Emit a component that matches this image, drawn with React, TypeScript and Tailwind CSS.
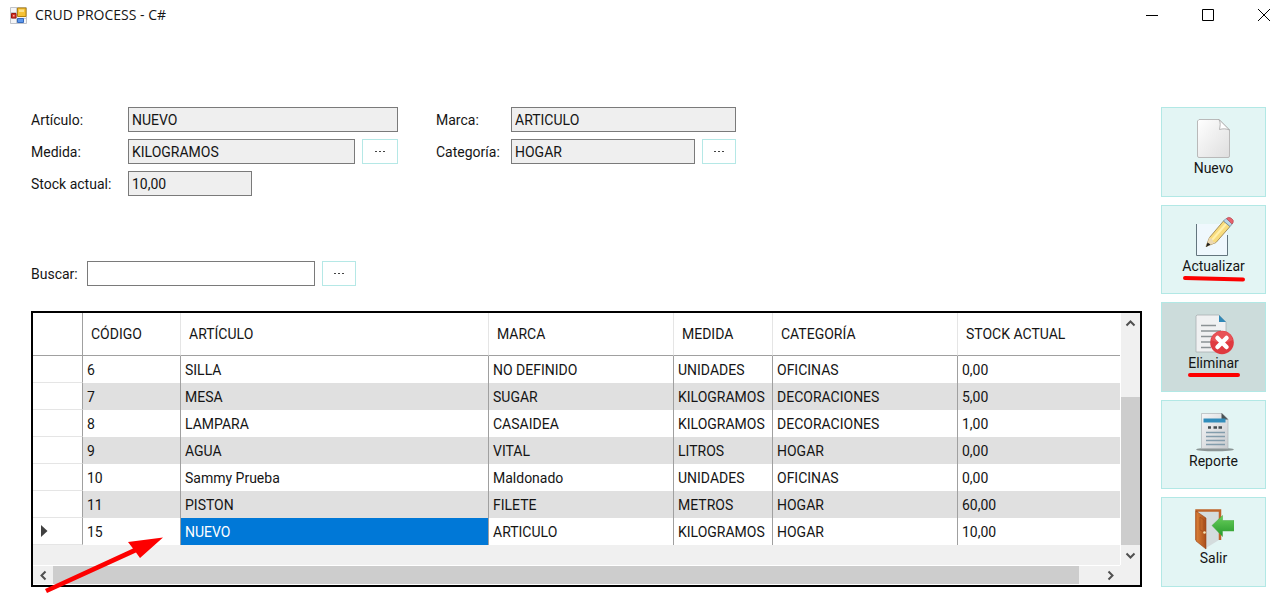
import { useState } from 'react'
import type { ReactNode } from 'react'

type Articulo = {
  codigo: number
  articulo: string
  marca: string
  medida: string
  categoria: string
  stock: string
}

const ARTICULOS: Articulo[] = [
  { codigo: 6, articulo: 'SILLA', marca: 'NO DEFINIDO', medida: 'UNIDADES', categoria: 'OFICINAS', stock: '0,00' },
  { codigo: 7, articulo: 'MESA', marca: 'SUGAR', medida: 'KILOGRAMOS', categoria: 'DECORACIONES', stock: '5,00' },
  { codigo: 8, articulo: 'LAMPARA', marca: 'CASAIDEA', medida: 'KILOGRAMOS', categoria: 'DECORACIONES', stock: '1,00' },
  { codigo: 9, articulo: 'AGUA', marca: 'VITAL', medida: 'LITROS', categoria: 'HOGAR', stock: '0,00' },
  { codigo: 10, articulo: 'Sammy Prueba', marca: 'Maldonado', medida: 'UNIDADES', categoria: 'OFICINAS', stock: '0,00' },
  { codigo: 11, articulo: 'PISTON', marca: 'FILETE', medida: 'METROS', categoria: 'HOGAR', stock: '60,00' },
  { codigo: 15, articulo: 'NUEVO', marca: 'ARTICULO', medida: 'KILOGRAMOS', categoria: 'HOGAR', stock: '10,00' },
]

const COLUMNAS = ['CÓDIGO', 'ARTÍCULO', 'MARCA', 'MEDIDA', 'CATEGORÍA', 'STOCK ACTUAL']

const CAMPO = 'h-[25px] min-w-0 border border-[#7a7a7a] bg-[#efefef] px-[3px] outline-none'

function IconoNuevo() {
  return (
    <svg width="40" height="42" viewBox="0 0 40 42" aria-hidden="true">
      <defs>
        <linearGradient id="hoja" x1="0" y1="0" x2="1" y2="1">
          <stop offset="0" stopColor="#ffffff" />
          <stop offset="1" stopColor="#dedede" />
        </linearGradient>
      </defs>
      <path d="M5 1.500H25L35.500 12V38A1.500 1.500 0 0 1 34 39.500H5A1.500 1.500 0 0 1 3.500 38V3Z" fill="url(#hoja)" stroke="#b9b9b9" />
      <path d="M25 1.500C27 5 26 8 25.500 11.500C29 10.500 32 10.500 35.500 12Z" fill="#fff" stroke="#a5a5a5" strokeWidth=".8" />
    </svg>
  )
}

function IconoActualizar() {
  return (
    <svg width="40" height="42" viewBox="0 0 40 42" aria-hidden="true">
      <path d="M2 8H33V40H2Z" fill="#eff8fd" />
      <path d="M2.500 8V39.500H33.500V19" fill="none" stroke="#63757e" />
      <path d="M12 30.500L15.500 21.500L29.500 5L36 10.500L22 26.500Z" fill="#f8dc7d" stroke="#937841" strokeWidth=".8" />
      <path d="M18 24L32 8" stroke="#fff0ac" strokeWidth="2" />
      <path d="M12 30.500L15.500 21.500L18 23L19 25.500L22 26.500Z" fill="#ecd8b1" />
      <path d="M12 31L13.500 26.500L16.500 28.500Z" fill="#202020" />
      <path d="M29.500 5L32 2.500L38.500 7.500L36 10.500Z" fill="#b9d5e8" stroke="#6e8da3" strokeWidth=".8" />
      <path d="M32.500 2.500Q34.500 0.500 37 2Q40.500 4 39 7L38 8Z" fill="#e8616b" stroke="#ad4850" strokeWidth=".6" />
    </svg>
  )
}

function IconoEliminar() {
  return (
    <svg width="40" height="42" viewBox="0 0 40 42" aria-hidden="true">
      <path d="M3 2H25L32 9V39H2V3Z" fill="#f0f1f2" stroke="#a9b0b3" strokeWidth=".8" />
      <path d="M25 2V9H32Z" fill="#3289b7" />
      <path d="M7 12.500H22M7 18H27M7 23.500H22M7 29H19M7 34.500H17" stroke="#8b9295" strokeWidth="1.300" />
      <circle cx="28" cy="29.500" r="11.800" fill="#df3a40" />
      <path d="M17 27A11.200 11.200 0 0 1 39 27Q28 32 17 27" fill="#ef6468" opacity=".6" />
      <path d="M23.500 25L32.500 34M32.500 25L23.500 34" stroke="#fff" strokeWidth="4.500" strokeLinecap="round" />
    </svg>
  )
}

function IconoReporte() {
  return (
    <svg width="40" height="42" viewBox="0 0 40 42" aria-hidden="true">
      <defs>
        <linearGradient id="reporte" x1="0" y1="0" x2="1" y2="1">
          <stop offset="0" stopColor="#f5f6f7" />
          <stop offset="1" stopColor="#c9cccf" />
        </linearGradient>
      </defs>
      <ellipse cx="21" cy="38.500" rx="19" ry="1.800" fill="#8b9595" />
      <path d="M7.500 2.500H28L34 8V37.500H7.500Z" fill="url(#reporte)" stroke="#afb5b8" strokeWidth=".7" />
      <path d="M27.500 2V8.500H34Z" fill="#4b5254" />
      <path d="M9.500 7.500H31.500V11.500H9.500Z" fill="#318dbb" />
      <path d="M14 16.500H17M19.500 16.500H23M24.500 16.500H28" stroke="#444c50" strokeWidth="2.500" />
      <path d="M12 21.500H31M12 25.500H31M12 29.500H31M12 33.500H31" stroke="#829cab" strokeWidth="1.300" />
    </svg>
  )
}

function IconoSalir() {
  return (
    <svg width="40" height="42" viewBox="0 0 40 42" aria-hidden="true">
      <defs>
        <linearGradient id="puerta" x1="0" y1="0" x2="1" y2="0">
          <stop offset="0" stopColor="#dc8138" />
          <stop offset="1" stopColor="#a94e1b" />
        </linearGradient>
        <linearGradient id="flecha" x1="0" y1="0" x2="0" y2="1">
          <stop offset="0" stopColor="#69cf5b" />
          <stop offset="1" stopColor="#26992c" />
        </linearGradient>
      </defs>
      <path d="M3 3H25V32L12 40V10Z" fill="#d4dcdd" />
      <path d="M2.500 32V2.500H26V32" fill="none" stroke="#bf642a" strokeWidth="2.500" />
      <path d="M2 3L12 10V41L2 33Z" fill="url(#puerta)" stroke="#934217" strokeWidth=".6" />
      <path d="M6 9L10 12V24L6 22Z" fill="none" stroke="#a14a1b" strokeWidth=".7" />
      <circle cx="10.500" cy="24.500" r="1.300" fill="#f5e3b4" />
      <path d="M18 17.500L28.500 7.500V12.500H40V23H28.500V28.500Z" fill="url(#flecha)" stroke="#44a93f" strokeWidth=".5" />
    </svg>
  )
}

type Accion = { nombre: string; icono: ReactNode; fondo: string; marca?: ReactNode }

const ACCIONES: Accion[] = [
  { nombre: 'Nuevo', icono: <IconoNuevo />, fondo: 'bg-[#e3f5f4]' },
  {
    nombre: 'Actualizar',
    icono: <IconoActualizar />,
    fondo: 'bg-[#e3f5f4]',
    marca: <path d="M2 4L60 5.500" />,
  },
  {
    nombre: 'Eliminar',
    icono: <IconoEliminar />,
    fondo: 'bg-[#ccdcdb]',
    marca: <path d="M7 4H55" />,
  },
  { nombre: 'Reporte', icono: <IconoReporte />, fondo: 'bg-[#e3f5f4]' },
  { nombre: 'Salir', icono: <IconoSalir />, fondo: 'bg-[#e3f5f4]' },
]

function BotonPuntos({ label, ancho }: { label: string; ancho: string }) {
  return (
    <button type="button" aria-label={label} className={`h-[25px] shrink-0 border border-[#b5e8e6] bg-white ${ancho}`}>
      <svg className="mx-auto" width="12" height="3" viewBox="0 0 12 3" fill="#444" aria-hidden="true">
        <path d="M1 1h2v1H1zM5 1h2v1H5zM9 1h2v1H9z" />
      </svg>
    </button>
  )
}

function Chevron({ d }: { d: string }) {
  return (
    <svg width="11" height="11" viewBox="0 0 11 11" fill="none" stroke="#505050" strokeWidth="2" aria-hidden="true">
      <path d={d} />
    </svg>
  )
}

function BarraTitulo() {
  return (
    <header className="flex h-[30px] items-center justify-between pl-[10px] pr-[17px]">
      <div className="flex items-center gap-2">
        <svg width="17" height="17" viewBox="0 0 17 17" aria-hidden="true">
          <path d="M.5.5H16.500V16.500H.5Z" fill="#f4f5f7" stroke="#c0c3c9" />
          <path d="M6.500 1V16M1 11.500H16M1 5.500H7" stroke="#c6c9cf" />
          <path d="M7.500 1H16V9.500H7.500Z" fill="#f5c136" stroke="#b4820d" />
          <path d="M9 2.500H14V5H9Z" fill="#fbe08a" />
          <path d="M1.500 6.500H6V11H1.500Z" fill="#d43227" stroke="#9c1711" />
          <path d="M3 8H4.500V9.500H3Z" fill="#f7a99e" />
          <path d="M7.500 11.500H13.500V15.500H7.500Z" fill="#5b97ec" stroke="#3569bb" />
        </svg>
        <h1 className="font-['Open_Sans','Noto_Sans',sans-serif] text-sm">CRUD PROCESS - C#</h1>
      </div>
      <div className="flex items-center gap-[42px]">
        <button type="button" aria-label="Minimizar">
          <svg width="14" height="14" viewBox="0 0 14 14" stroke="#000" aria-hidden="true"><path d="M1 7.500H13" /></svg>
        </button>
        <button type="button" aria-label="Maximizar">
          <svg width="14" height="14" viewBox="0 0 14 14" fill="none" stroke="#000" aria-hidden="true"><path d="M1.500 1.500H12.500V12.500H1.500Z" /></svg>
        </button>
        <button type="button" aria-label="Cerrar">
          <svg width="14" height="14" viewBox="0 0 14 14" stroke="#000" aria-hidden="true"><path d="M1 1L13 13M13 1L1 13" /></svg>
        </button>
      </div>
    </header>
  )
}

function Formulario() {
  return (
    <form className="flex gap-[38px]">
      <div className="grid grid-cols-[97px_270px] items-center gap-y-[7px]">
        <label htmlFor="articulo">Artículo:</label>
        <input id="articulo" className={CAMPO} defaultValue="NUEVO" readOnly />
        <label htmlFor="medida">Medida:</label>
        <div className="flex gap-[7px]">
          <input id="medida" className={`${CAMPO} flex-1`} defaultValue="KILOGRAMOS" readOnly />
          <BotonPuntos label="Elegir medida" ancho="w-9" />
        </div>
        <label htmlFor="stock">Stock actual:</label>
        <input id="stock" className={`${CAMPO} w-[124px]`} defaultValue="10,00" readOnly />
      </div>
      <div className="grid grid-cols-[75px_225px] content-start items-center gap-y-[7px]">
        <label htmlFor="marca">Marca:</label>
        <input id="marca" className={CAMPO} defaultValue="ARTICULO" readOnly />
        <label htmlFor="categoria">Categoría:</label>
        <div className="flex gap-[7px]">
          <input id="categoria" className={`${CAMPO} flex-1`} defaultValue="HOGAR" readOnly />
          <BotonPuntos label="Elegir categoría" ancho="w-[34px]" />
        </div>
      </div>
    </form>
  )
}

function Grilla() {
  const [seleccion, setSeleccion] = useState(15)

  return (
    <div className="relative border-2 border-black bg-[#f0f0f0]">
      <div className="flex">
        <div className="min-w-0 flex-1 pb-5">
          <table className="w-full table-fixed border-separate border-spacing-0 bg-white text-left">
            <colgroup>
              <col className="w-[50px]" />
              <col className="w-[98px]" />
              <col />
              <col className="w-[185px]" />
              <col className="w-[99px]" />
              <col className="w-[185px]" />
              <col className="w-[162px]" />
            </colgroup>
            <thead>
              <tr className="h-[43px]">
                <th className="border-b border-r border-[#a0a0a0]" />
                {COLUMNAS.map(c => (
                  <th key={c} className="border-b border-r border-b-[#a0a0a0] border-r-[#e5e5e5] px-2 font-normal last:border-r-0">{c}</th>
                ))}
              </tr>
            </thead>
            <tbody>
              {ARTICULOS.map(a => (
                <tr key={a.codigo} onClick={() => setSeleccion(a.codigo)}
                  className="h-[27px] even:bg-[#e0e0e0] *:border-r *:border-[#a0a0a0] *:px-1 *:py-0 *:last:border-r-0">
                  <td className="border-b border-b-[#e5e5e5]! bg-white">
                    {seleccion === a.codigo && (
                      <svg className="ml-1" width="7" height="12" viewBox="0 0 7 12" fill="#404040" aria-hidden="true"><path d="M0 0L6.500 6L0 12Z" /></svg>
                    )}
                  </td>
                  <td>{a.codigo}</td>
                  <td className={seleccion === a.codigo ? 'bg-[#0078d7] text-white' : ''}>{a.articulo}</td>
                  <td>{a.marca}</td>
                  <td>{a.medida}</td>
                  <td>{a.categoria}</td>
                  <td>{a.stock}</td>
                </tr>
              ))}
            </tbody>
          </table>
        </div>
        {/* Scroll vertical */}
        <div className="flex w-5 flex-col items-center border-l border-white">
          <button type="button" aria-label="Subir" className="flex h-5 items-center"><Chevron d="M1.500 7.500L5.500 3.500L9.500 7.500" /></button>
          <div className="flex w-full flex-1 flex-col justify-end">
            <div className="h-[70%] bg-[#cdcdcd]" />
          </div>
          <button type="button" aria-label="Bajar" className="flex h-5 items-center"><Chevron d="M1.500 3.500L5.500 7.500L9.500 3.500" /></button>
        </div>
      </div>
      {/* Scroll horizontal */}
      <div className="mr-5 flex h-5 items-center border-y border-white">
        <button type="button" aria-label="Izquierda" className="flex w-5 justify-center"><Chevron d="M7.500 1.500L3.500 5.500L7.500 9.500" /></button>
        <div className="flex h-full flex-1">
          <div className="w-[98%] bg-[#cdcdcd]" />
        </div>
        <button type="button" aria-label="Derecha" className="flex w-5 justify-center"><Chevron d="M3.500 1.500L7.500 5.500L3.500 9.500" /></button>
      </div>
      {/* Flecha roja hacia la fila seleccionada */}
      <svg className="pointer-events-none absolute -bottom-2 left-3" width="120" height="60" viewBox="0 0 120 60" fill="#fd0000" aria-hidden="true">
        <path d="M0 56L88 15.500L83 9L118 4.500L95 25L91 19.500L2 60Z" />
      </svg>
    </div>
  )
}

export default function App() {
  return (
    <div className="bg-white font-[Roboto,'Liberation_Sans',sans-serif] text-sm leading-5 text-[#151515]">
      <BarraTitulo />
      <main className="flex gap-[19px] pb-3 pl-[31px] pr-[22px] pt-[77px]">
        <div className="min-w-0 flex-1">
          <Formulario />
          <div className="mb-[25px] mt-[65px] flex items-center gap-[7px]">
            <label htmlFor="buscar" className="w-[49px]">Buscar:</label>
            <input id="buscar" className="h-[25px] w-[228px] border border-[#7a7a7a] bg-white px-[3px] outline-none" />
            <BotonPuntos label="Buscar artículo" ancho="w-[34px]" />
          </div>
          <Grilla />
        </div>

        {/* Acciones */}
        <nav className="flex w-[105px] flex-col gap-2">
          {ACCIONES.map(a => (
            <button key={a.nombre} type="button" className={`flex flex-1 flex-col items-center border border-[#b2e8e5] pt-[10px] leading-4 ${a.fondo}`}>
              {a.icono}
              {a.nombre}
              {a.marca && (
                <svg width="62" height="8" viewBox="0 0 62 8" stroke="#fd0000" strokeWidth="4" strokeLinecap="round" aria-hidden="true">{a.marca}</svg>
              )}
            </button>
          ))}
        </nav>
      </main>
    </div>
  )
}
